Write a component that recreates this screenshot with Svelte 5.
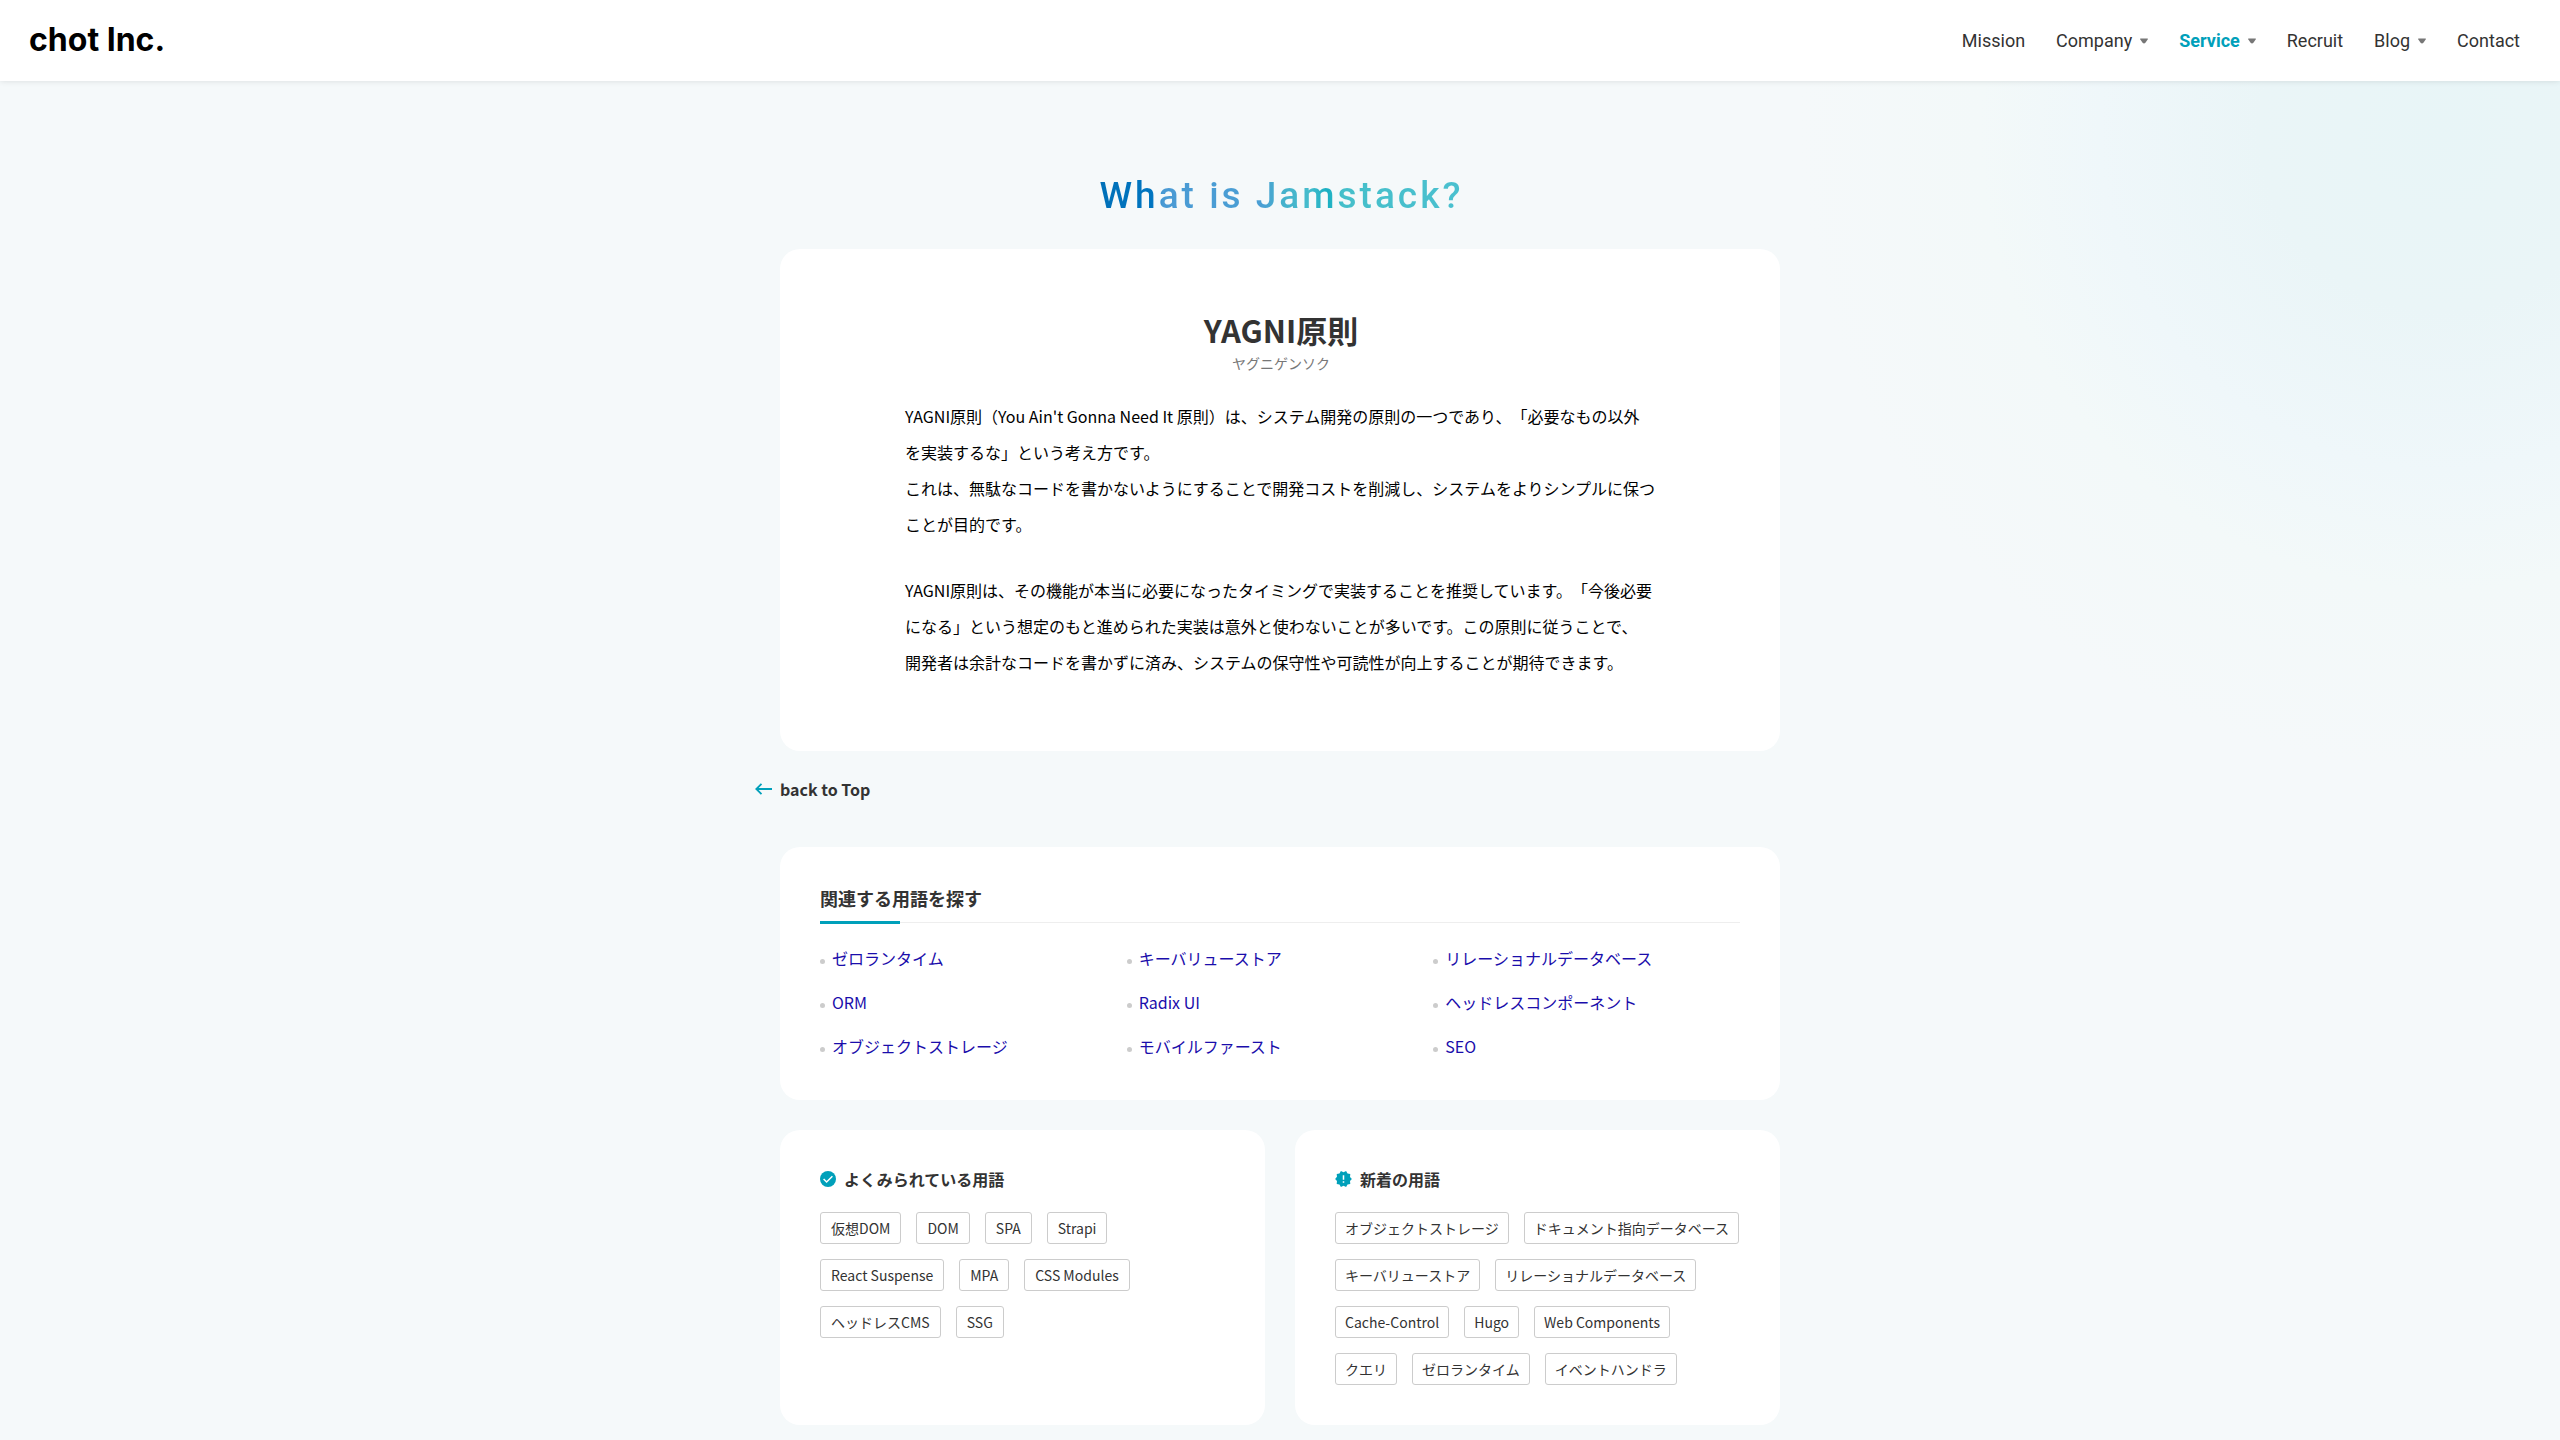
<script>
  const nav = [
    { label: 'Mission' },
    { label: 'Company', menu: true },
    { label: 'Service', menu: true, active: true },
    { label: 'Recruit' },
    { label: 'Blog', menu: true },
    { label: 'Contact' },
  ];
  const related = [
    'ゼロランタイム', 'キーバリューストア', 'リレーショナルデータベース',
    'ORM', 'Radix UI', 'ヘッドレスコンポーネント',
    'オブジェクトストレージ', 'モバイルファースト', 'SEO',
  ];
  const popular = ['仮想DOM', 'DOM', 'SPA', 'Strapi', 'React Suspense', 'MPA', 'CSS Modules', 'ヘッドレスCMS', 'SSG'];
  const latest = [
    'オブジェクトストレージ', 'ドキュメント指向データベース', 'キーバリューストア', 'リレーショナルデータベース',
    'Cache-Control', 'Hugo', 'Web Components', 'クエリ', 'ゼロランタイム', 'イベントハンドラ',
  ];
</script>

<div class="page">
  <header>
    <a class="logo" href="/">chot Inc.</a>
    <nav>
      {#each nav as item}
        <a href="/#{item.label.toLowerCase()}" class:active={item.active}>
          {item.label}
          {#if item.menu}
            <svg width="8" height="6" viewBox="0 0 8 6" aria-hidden="true"><path d="M.6.4h6.8q.8 0 .4.8L5.4 4.8Q4 6.4 2.600 4.800L.2 1.200Q-.2.4.6.4Z" fill="#777" /></svg>
          {/if}
        </a>
      {/each}
    </nav>
  </header>

  <main>
    <h1>What is Jamstack?</h1>

    <article class="card term">
      <h2>YAGNI原則</h2>
      <p class="ruby">ヤグニゲンソク</p>
      <div class="body">
        <p>YAGNI原則（You Ain't Gonna Need It 原則）は、システム開発の原則の一つであり、「必要なもの以外<span class="keep">を実装</span>するな」という考え方です。<br />これは、無駄なコードを書かないようにすることで開発コストを削減し、システムをよりシンプルに保つことが目的です。</p>
        <p>YAGNI原則は、その機能が本当に必要になったタイミングで実装することを推奨しています。「今後必要になる」という想定のもと進められた実装は意外と使わないことが多いです。この原則に従うことで、<span class="keep">開発者</span>は余計なコードを書かずに済み、システムの保守性や可読性が向上することが期待できます。</p>
      </div>
    </article>

    <a class="back" href="/#top">
      <svg width="17" height="12" viewBox="0 0 17 12" fill="none" stroke="#00a0ba" stroke-width="1.800" aria-hidden="true"><path d="M1.500 6H17M6.500.8 1.300 6l5.200 5.200" /></svg>
      back to Top
    </a>

    <section class="card related">
      <h2>関連する用語を探す</h2>
      <ul>
        {#each related as term}
          <li><a href="/#{term}">{term}</a></li>
        {/each}
      </ul>
    </section>

    <div class="pair">
      <section class="card terms">
        <h3>
          <svg width="16" height="16" viewBox="0 0 16 16" aria-hidden="true"><circle cx="8" cy="8" r="8" fill="#00a0ba" /><path d="m3.600 8 3 3 5.800-5.800" fill="none" stroke="#fff" stroke-width="1.500" /></svg>
          よくみられている用語
        </h3>
        <div class="chips roomy">
          {#each popular as term}<a href="/#{term}">{term}</a>{/each}
        </div>
      </section>
      <section class="card terms">
        <h3>
          <svg width="17" height="16" viewBox="1 1.500 22 21" aria-hidden="true"><path fill="#00a0ba" d="m23 12-2.440-2.780.34-3.680-3.610-.82-1.890-3.180L12 3 8.600 1.540 6.710 4.720l-3.610.81.34 3.680L1 12l2.440 2.780-.34 3.690 3.610.82 1.890 3.180L12 21l3.400 1.460 1.890-3.180 3.610-.82-.34-3.680L23 12Zm-10 5h-2v-2h2v2Zm0-4h-2V7h2v6Z" /></svg>
          新着の用語
        </h3>
        <div class="chips">
          {#each latest as term}<a href="/#{term}">{term}</a>{/each}
        </div>
      </section>
    </div>
  </main>
</div>

<style>
  :global(body) {
    background: #f5f9fa;
    color: #333;
    font-family: 'Noto Sans CJK JP', sans-serif;
    text-spacing-trim: space-all;
  }
  a { color: inherit; text-decoration: none; }
  h1, h2, h3, p, ul { margin: 0; padding: 0; }
  .page {
    min-height: 100vh;
    background: radial-gradient(circle at calc(100% - 120px) 130px, #e8f5f7 0, #eaf5f7 180px, #eff7fa 340px, #f3f9f9 460px, #f5f9fa 640px);
  }
  header {
    display: flex;
    align-items: center;
    justify-content: space-between;
    height: 81px;
    padding: 0 40px 0 29px;
    background: #fff;
    box-shadow: 0 0 6px rgba(0, 0, 0, 0.12);
  }
  .logo {
    padding-bottom: 2px;
    color: #000;
    font: 700 32px/40px Inter, sans-serif;
  }
  nav {
    display: flex;
    gap: 31px;
    font: 400 18px/24px Roboto, sans-serif;
  }
  nav a { display: flex; align-items: center; gap: 8px; }
  nav .active { color: #00a0ba; font-weight: 700; }
  main {
    max-width: 1000px;
    margin: 0 auto;
    padding: 93px 20px 15px;
  }
  h1 {
    width: fit-content;
    margin: 0 auto;
    padding-left: 3px;
    font: 500 37px/44px Roboto, sans-serif;
    letter-spacing: 3px;
    color: transparent;
    background: linear-gradient(90deg, #0070b8 0, #0075c0 15%, #4a9ad4 18%, #4a9fd4 45%, #45b0cc 50%, #45bccc 58%, #18afc2 63%, #45bfca 67%, #4ac0cf 100%);
    background-clip: text;
  }
  .card { background: #fff; border-radius: 20px; }
  .term { margin-top: 31px; padding: 60px 123px 71px 125px; }
  .term h2 { font-size: 31px; line-height: 42px; text-align: center; }
  .ruby { margin-top: 2px; font-size: 14px; line-height: 20px; text-align: center; color: #777; }
  .body { margin-top: 25px; color: #000; font-size: 16px; line-height: 36px; }
  .body p + p { margin-top: 30px; }
  .keep { white-space: nowrap; }
  .back {
    display: flex;
    align-items: center;
    gap: 8px;
    width: fit-content;
    margin: 26px 0 46px -25px;
    font-size: 16px;
    font-weight: 700;
    line-height: 24px;
  }
  .related { padding: 38px 40px 32px; }
  .related h2 {
    padding-bottom: 13px;
    font-size: 18px;
    line-height: 26px;
    background:
      linear-gradient(#00a0ba, #00a0ba) left bottom / 80px 3px no-repeat,
      linear-gradient(#eee, #eee) left calc(100% - 1px) / 100% 1px no-repeat;
  }
  ul {
    display: grid;
    grid-template-columns: repeat(3, 1fr);
    margin-top: 12px;
    list-style: none;
  }
  li {
    display: flex;
    align-items: center;
    gap: 7px;
    color: #1a0dab;
    font-size: 16px;
    line-height: 44px;
  }
  li::before {
    content: '';
    width: 5px;
    height: 5px;
    margin-top: 6px;
    border-radius: 50%;
    background: #ccc;
  }
  .pair {
    display: grid;
    grid-template-columns: 1fr 1fr;
    gap: 30px;
    margin-top: 30px;
  }
  .terms { padding: 37px 40px 40px; }
  h3 {
    display: flex;
    align-items: center;
    gap: 8px;
    font-size: 16px;
    line-height: 24px;
  }
  .chips {
    display: flex;
    flex-wrap: wrap;
    gap: 15px;
    margin-top: 21px;
  }
  .chips a {
    padding: 0 9px;
    border: 1px solid #ccc;
    border-radius: 3px;
    font-size: 14px;
    line-height: 30px;
  }
  .chips.roomy a { padding: 0 10px; }
</style>
